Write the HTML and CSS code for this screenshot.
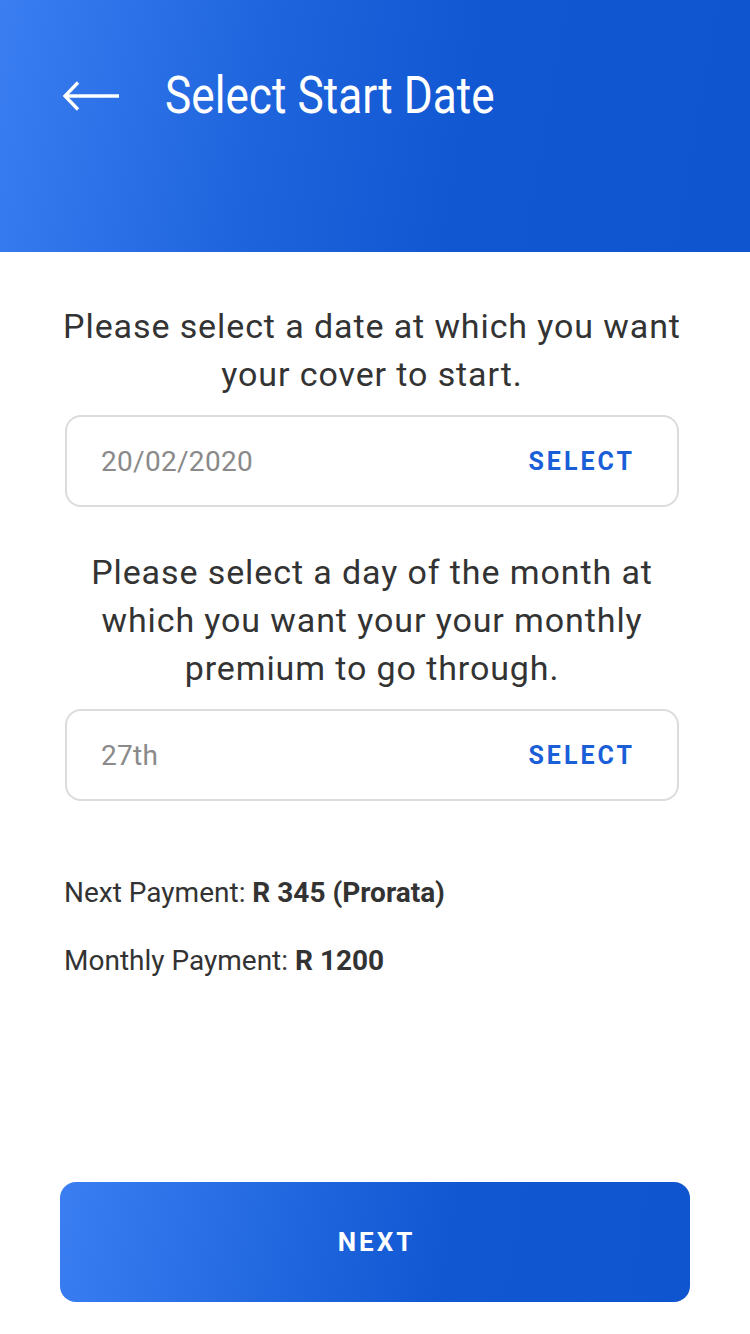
FILE: index.html
```html
<!DOCTYPE html>
<html>
<head>
<meta charset="utf-8">
<link rel="stylesheet" href="styles.css">
</head>
<body>
<div class="screen">
  <header class="header">
    <svg class="back" width="60" height="30" viewBox="0 0 60 30" fill="none" stroke="#fff" stroke-width="3.3">
      <path d="M4 15 H58"/>
      <path d="M17 1.5 L4 15 L17 28.5" stroke-linejoin="miter"/>
    </svg>
    <h1 class="title">Select Start Date</h1>
  </header>
  <main class="content">
    <p class="prompt">Please select a date at which you want your cover to start.</p>
    <div class="field">
      <span class="value">20/02/2020</span>
      <span class="action">SELECT</span>
    </div>
    <p class="prompt prompt-2">Please select a day of the month at which you want your your monthly premium to go through.</p>
    <div class="field">
      <span class="value">27th</span>
      <span class="action">SELECT</span>
    </div>
    <div class="summary">
      <p class="line">Next Payment: <b>R 345 (Prorata)</b></p>
      <p class="line">Monthly Payment: <b>R 1200</b></p>
    </div>
  </main>
  <div class="footer">
    <button class="next">NEXT</button>
  </div>
</div>
</body>
</html>
```
FILE: styles.css
```css
* { box-sizing: border-box; }
html, body { margin: 0; padding: 0; }
body {
  font-family: Roboto, "Liberation Sans", sans-serif;
  color: #333;
  background: #fff;
}
.screen {
  width: 750px;
  height: 1334px;
  display: flex;
  flex-direction: column;
}
.header {
  height: 252px;
  flex-shrink: 0;
  background: linear-gradient(100deg, #3a7ef2 0%, #1e64dc 35%, #1157d2 62%, #1055d0 100%);
  display: flex;
  align-items: flex-start;
  padding: 66px 0 0 61px;
}
.back {
  margin-top: 15px;
  flex-shrink: 0;
}
.title {
  margin: 0 0 0 44px;
  font-weight: 400;
  font-size: 52px;
  line-height: 60px;
  color: #fff;
  transform: scaleX(0.85);
  transform-origin: left center;
  white-space: nowrap;
}
.content {
  padding: 50px 6px 0 0;
  display: flex;
  flex-direction: column;
  align-items: center;
}
.prompt {
  margin: 0;
  width: 640px;
  text-align: center;
  font-size: 34px;
  letter-spacing: 0.9px;
  line-height: 48px;
  color: #333;
}
.prompt-2 {
  margin-top: 41px;
}
.field {
  margin-top: 17px;
  width: 614px;
  height: 92px;
  border: 2px solid #dcdcdc;
  border-radius: 16px;
  display: flex;
  align-items: center;
  justify-content: space-between;
  padding: 0 42px 0 34px;
}
.value {
  font-size: 28px;
  letter-spacing: 0.3px;
  color: #8a8a8a;
}
.action {
  font-size: 25px;
  font-weight: 700;
  color: #1a5fd8;
  letter-spacing: 3px;
}
.summary {
  align-self: stretch;
  padding: 0 0 0 64px;
  margin-top: 72px;
}
.line {
  margin: 0;
  font-size: 28px;
  line-height: 40px;
  color: #333;
}
.line + .line {
  margin-top: 28px;
}
.line b { font-weight: 700; }
.footer {
  margin-top: auto;
  padding: 0 60px 32px;
}
.next {
  width: 630px;
  height: 120px;
  border: none;
  border-radius: 16px;
  background: linear-gradient(100deg, #3a7ef2 0%, #1e64dc 40%, #1157d2 62%, #1055d0 100%);
  color: #fff;
  font-family: Roboto, "Liberation Sans", sans-serif;
  font-size: 26px;
  font-weight: 700;
  letter-spacing: 3px;
  padding: 0 0 0 3px;
}
```
